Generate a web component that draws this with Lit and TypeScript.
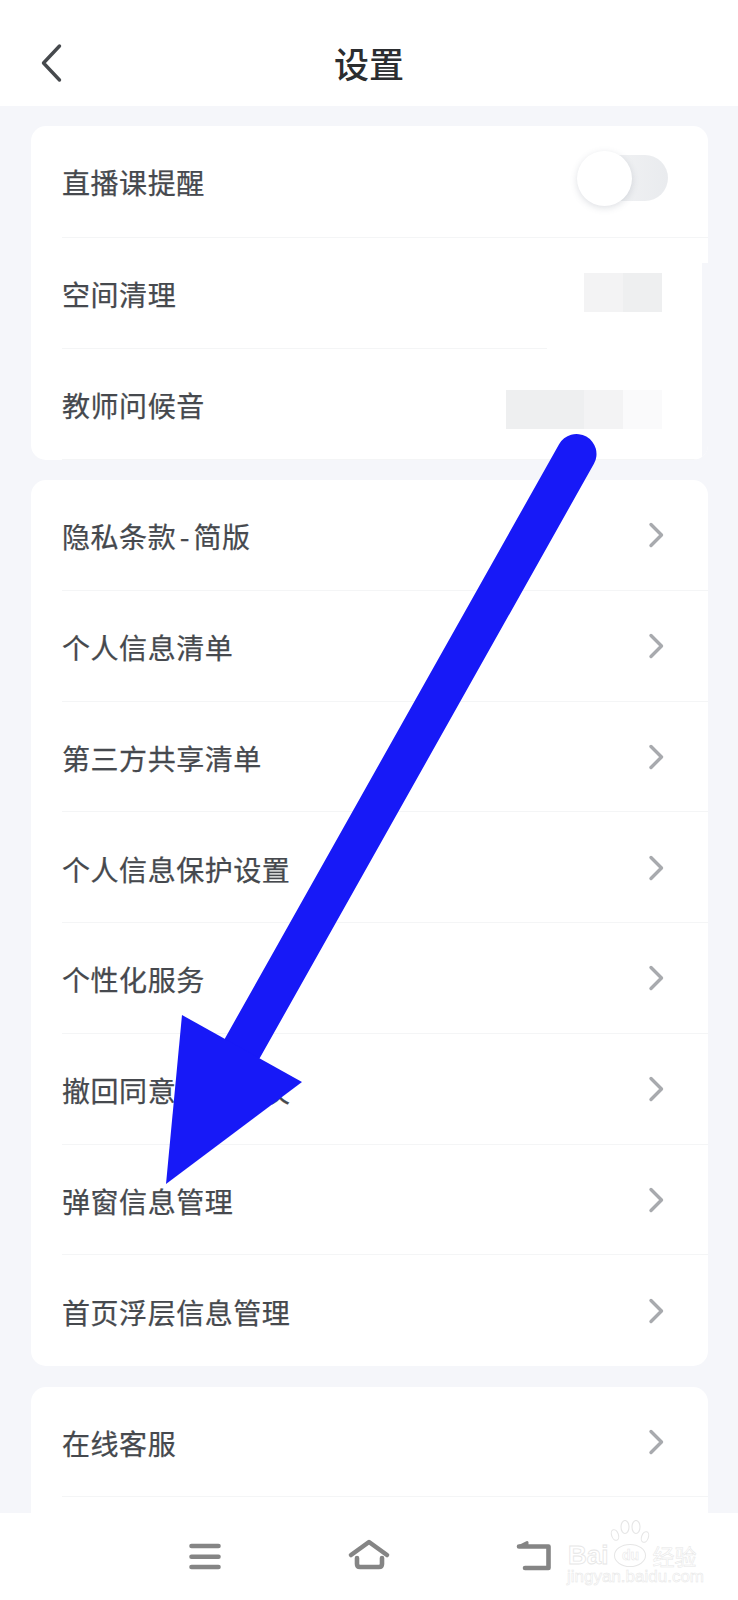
import { LitElement, html, css, svg } from "lit";
import { customElement } from "lit/decorators.js";

const chevron = html`<svg class="chev" width="16" height="26" viewBox="0 0 16 26" fill="none"><path d="M3 2.5 L13.5 13 L3 23.5" stroke="#a8aaae" stroke-width="3.4" stroke-linecap="round" stroke-linejoin="round"/></svg>`;

@customElement("app-root")
export class AppRoot extends LitElement {
  static styles = css`
    :host {
      display: block;
      position: relative;
      width: 738px;
      height: 1600px;
      overflow: hidden;
      background: #f5f6fa;
      font-family: "Noto Sans CJK SC", "Noto Sans", sans-serif;
    }
    .header {
      box-sizing: border-box;
      height: 106px;
      padding-top: 19px;
      background: #fff;
      display: grid;
      grid-template-columns: 1fr auto 1fr;
      align-items: center;
    }
    .back { margin-left: 40px; display: block; }
    .title {
      font-size: 35px;
      font-weight: 500;
      color: #2b2d30;
      line-height: 40px;
    }
    .main {
      padding: 19.5px 30px 0 31px;
      display: flex;
      flex-direction: column;
      gap: 20.5px;
    }
    .card {
      position: relative;
      background: #fff;
      border-radius: 15px;
      overflow: hidden;
      flex: none;
    }
    .row {
      box-sizing: border-box;
      height: 110.75px;
      margin-left: 31px;
      padding-right: 44px;
      display: flex;
      align-items: center;
      justify-content: space-between;
      border-bottom: 1px solid #f4f5f6;
    }
    .row:last-child { border-bottom: none; }
    .r1 { height: 112.5px; }
    .r2 { height: 110.5px; }
    .r3 { height: 111px; }
    .cut {
      border-bottom: none;
      background: linear-gradient(#f4f5f6, #f4f5f6) left bottom / 485px 1px no-repeat;
    }
    .label {
      font-size: 28px;
      letter-spacing: 0.55px;
      color: #46494e;
      line-height: 40px;
      padding-top: 3px;
      -webkit-text-stroke: 0.25px #46494e;
    }
    .r1 .label, .r2 .label { padding-top: 1px; }
    .hy { margin: 0 3.5px; }
    .toggle {
      position: relative;
      width: 83px;
      height: 46px;
      margin: 0 -4px 6px 0;
      border-radius: 23px;
      background: linear-gradient(90deg, #f4f5f6, #e9ebee);
    }
    .knob {
      position: absolute;
      left: -8px;
      top: -4px;
      width: 55px;
      height: 55px;
      border-radius: 50%;
      background: #fff;
      box-shadow: 0 2px 7px rgba(90, 100, 120, 0.2);
    }
    .blur { display: flex; height: 39px; }
    .blur.low { margin: 11px 2px 0 0; }
    .blur.mid { margin: 0 2px 2px 0; }
    .seg-a { width: 39px; background: #f3f3f4; }
    .seg-b { width: 39px; background: #eeeff0; }
    .seg-c { width: 39px; background: #fafafb; }
    .seg-wide { width: 78px; background: #eeeff0; }
    .chev { margin-top: 1px; }
    .edge {
      position: absolute;
      right: 0;
      top: 137px;
      bottom: 0;
      width: 6px;
      background: #f5f6fa;
    }
    .nav {
      position: absolute;
      left: 0;
      right: 0;
      bottom: 0;
      height: 87px;
      box-sizing: border-box;
      padding: 25px 0 0 187px;
      background: #fff;
      display: flex;
      align-items: flex-start;
    }
    .nav svg { display: block; }
    .nav .home { margin-left: 125px; }
    .nav .ret { margin-left: 121px; }
    .arrow {
      position: absolute;
      left: 0;
      top: 0;
      pointer-events: none;
    }
    .wm {
      position: absolute;
      left: 568px;
      top: 1520px;
      width: 132px;
      color: #fff;
      font-family: "Liberation Sans", sans-serif;
      -webkit-text-stroke: 0.8px #e6e6e6;
    }
    .paw { display: block; margin-left: 42px; }
    .wm-top {
      display: flex;
      align-items: center;
      height: 22px;
    }
    .bai { font-size: 26px; line-height: 22px; font-weight: 700; }
    .du {
      box-sizing: border-box;
      width: 32px;
      height: 23px;
      margin: 0 6px;
      border: 1px solid #e6e6e6;
      border-radius: 50%;
      text-align: center;
      font-size: 14px;
      line-height: 20px;
      font-weight: 700;
      -webkit-text-stroke: 0.5px #e6e6e6;
    }
    .jing {
      font-family: "Noto Sans CJK SC", sans-serif;
      font-size: 22px;
      line-height: 22px;
      font-weight: 400;
      -webkit-text-stroke: 0.5px #e6e6e6;
    }
    .url {
      font-size: 17px;
      line-height: 16px;
      margin: 3px 0 0 -1px;
      white-space: nowrap;
      -webkit-text-stroke: 0.5px #e6e6e6;
    }
  `;

  private rows = [
    "个人信息清单",
    "第三方共享清单",
    "个人信息保护设置",
    "个性化服务",
    "撤回同意隐私协议",
    "弹窗信息管理",
    "首页浮层信息管理",
  ];

  render() {
    return html`
      <div class="header">
        <svg class="back" width="24" height="40" viewBox="0 0 24 40" fill="none">
          <path d="M19.5 3 L3.5 20 L19.5 37" stroke="#46494d" stroke-width="3.4" stroke-linecap="round" stroke-linejoin="round"/>
        </svg>
        <div class="title">设置</div>
        <div></div>
      </div>
      <div class="main">
        <div class="card">
          <div class="row r1">
            <span class="label">直播课提醒</span>
            <div class="toggle"><div class="knob"></div></div>
          </div>
          <div class="row r2 cut">
            <span class="label">空间清理</span>
            <div class="blur mid"><div class="seg-a"></div><div class="seg-b"></div></div>
          </div>
          <div class="row r3">
            <span class="label">教师问候音</span>
            <div class="blur low"><div class="seg-wide"></div><div class="seg-a"></div><div class="seg-c"></div></div>
          </div>
          <div class="edge"></div>
        </div>
        <div class="card">
          <div class="row"><span class="label">隐私条款<span class="hy">-</span>简版</span>${chevron}</div>
          ${this.rows.map((r) => html`<div class="row"><span class="label">${r}</span>${chevron}</div>`)}
        </div>
        <div class="card">
          <div class="row"><span class="label">在线客服</span>${chevron}</div>
          <div class="row"></div>
        </div>
      </div>
      <svg class="arrow" width="738" height="1600" viewBox="0 0 738 1600">
        ${svg`<path d="M576.5 454 L242.5 1048" stroke="#1719f7" stroke-width="40" stroke-linecap="round" fill="none"/>
        <polygon points="182,1015 302,1082 166,1184" fill="#1719f7"/>`}
      </svg>
      <div class="nav">
        <svg width="35" height="34" viewBox="0 0 35 34" fill="none" stroke="#858585" stroke-width="4.6" stroke-linecap="round">
          <path d="M4.5 8 H31.5 M4.5 18.7 H31.5 M4.5 29 H31.5"/>
        </svg>
        <svg class="home" width="44" height="34" viewBox="0 0 44 34" fill="none" stroke="#858585" stroke-width="4.6" stroke-linecap="round" stroke-linejoin="round">
          <path d="M4 17 L22 4 L40 17"/>
          <path d="M10 20 V26 Q10 29 13 29 H32 Q35 29 35 26 V20"/>
        </svg>
        <svg class="ret" width="42" height="34" viewBox="0 0 42 34" fill="#858585" stroke="#858585" stroke-width="4.6" stroke-linecap="round" stroke-linejoin="round">
          <path d="M7 8.5 H36.5 V30 H13" fill="none"/>
          <path d="M7 8.5 L15 4.5 V8.5 Z" stroke-width="3"/>
        </svg>
      </div>
      <div class="wm">
        <svg class="paw" width="40" height="24" viewBox="0 0 40 24" fill="#fff" stroke="#e6e6e6" stroke-width="1.1">
          <ellipse cx="5" cy="15" rx="3.4" ry="5.5" transform="rotate(-20 5 15)"/>
          <ellipse cx="15" cy="7" rx="4" ry="6.5"/>
          <ellipse cx="26" cy="7" rx="4" ry="6.5"/>
          <ellipse cx="35" cy="17" rx="3.4" ry="5.5" transform="rotate(20 35 17)"/>
        </svg>
        <div class="wm-top">
          <span class="bai">Bai</span><span class="du">du</span><span class="jing">经验</span>
        </div>
        <div class="url">jingyan.baidu.com</div>
      </div>
    `;
  }
}
